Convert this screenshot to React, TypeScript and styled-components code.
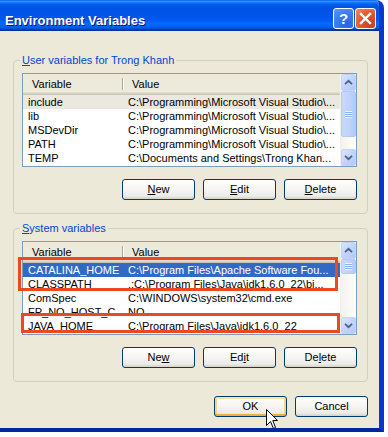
import React from 'react';
import styled, { createGlobalStyle } from 'styled-components';

const GlobalStyle = createGlobalStyle`
  html, body {
    margin: 0;
    padding: 0;
    background: #ffffff;
  }
  body {
    font-family: "Liberation Sans", Tahoma, Arial, sans-serif;
    font-size: 11px;
    color: #000000;
  }
`;

type Row = { name: string; value: string; state?: 'focus' | 'blur' };

const userVars: Row[] = [
  { name: 'include', value: 'C:\\Programming\\Microsoft Visual Studio\\...', state: 'blur' },
  { name: 'lib', value: 'C:\\Programming\\Microsoft Visual Studio\\...' },
  { name: 'MSDevDir', value: 'C:\\Programming\\Microsoft Visual Studio\\...' },
  { name: 'PATH', value: 'C:\\Programming\\Microsoft Visual Studio\\...' },
  { name: 'TEMP', value: 'C:\\Documents and Settings\\Trong Khan...' },
];

const systemVars: Row[] = [
  { name: 'CATALINA_HOME', value: 'C:\\Program Files\\Apache Software Fou...', state: 'focus' },
  { name: 'CLASSPATH', value: '.;C:\\Program Files\\Java\\jdk1.6.0_22\\bi...' },
  { name: 'ComSpec', value: 'C:\\WINDOWS\\system32\\cmd.exe' },
  { name: 'FP_NO_HOST_C...', value: 'NO' },
  { name: 'JAVA_HOME', value: 'C:\\Program Files\\Java\\jdk1.6.0_22' },
];

const Arrow = ({ up }: { up?: boolean }) => (
  <svg width="15" height="15" viewBox="0 0 15 15">
    <polyline
      points={up ? '3.5,9.5 7.5,5.5 11.5,9.5' : '3.5,5.5 7.5,9.5 11.5,5.5'}
      fill="none"
      stroke="#4d6185"
      strokeWidth="2"
    />
  </svg>
);

const Scroll = ({ thumb }: { thumb: number }) => (
  <ScrollBar>
    <ScrollButton>
      <Arrow up />
    </ScrollButton>
    <Thumb style={{ height: thumb }}>
      <Grip />
    </Thumb>
    <Track />
    <ScrollButton>
      <Arrow />
    </ScrollButton>
  </ScrollBar>
);

const VarList = ({
  rows,
  thumb,
  children,
}: {
  rows: Row[];
  thumb: number;
  children?: React.ReactNode;
}) => (
  <ListView>
    <ListBody>
      <Header>
        <HeaderCell divider>Variable</HeaderCell>
        <HeaderCell>Value</HeaderCell>
      </Header>
      {rows.map((r) => (
        <ListRow key={r.name} state={r.state}>
          <Cell>{r.name}</Cell>
          <Cell>{r.value}</Cell>
        </ListRow>
      ))}
    </ListBody>
    <Scroll thumb={thumb} />
    {children}
  </ListView>
);

const App: React.FC = () => (
  <>
    <GlobalStyle />
    <Window>
      <TitleBar>
        <Title>Environment Variables</Title>
        <Controls>
          <HelpButton>?</HelpButton>
          <CloseButton>
            <svg width="13" height="13" viewBox="0 0 13 13">
              <path d="M2 2 L11 11 M11 2 L2 11" stroke="#ffffff" strokeWidth="2.4" strokeLinecap="square" />
            </svg>
          </CloseButton>
        </Controls>
      </TitleBar>

      <Body>
        <GroupBox>
          <Legend>
            <u>U</u>ser variables for Trong Khanh
          </Legend>
          <VarList rows={userVars} thumb={46} />
          <ButtonRow>
            <Button>
              <u>N</u>ew
            </Button>
            <Button>
              <u>E</u>dit
            </Button>
            <Button>
              <u>D</u>elete
            </Button>
          </ButtonRow>
        </GroupBox>

        <GroupBox>
          <Legend>
            <u>S</u>ystem variables
          </Legend>
          <VarList rows={systemVars} thumb={15}>
            <Marker style={{ left: -5, top: 15, width: 320, height: 34 }} />
            <Marker style={{ left: -2, top: 71, width: 319, height: 20 }} />
          </VarList>
          <ButtonRow>
            <Button>
              Ne<u>w</u>
            </Button>
            <Button>
              Ed<u>i</u>t
            </Button>
            <Button>
              De<u>l</u>ete
            </Button>
          </ButtonRow>
        </GroupBox>

        <DialogButtons>
          <Button hot>OK</Button>
          <Button>Cancel</Button>
        </DialogButtons>
      </Body>

      <Pointer width="13" height="21" viewBox="0 0 13 21">
        <path
          d="M0.5 0.5 L0.5 16.5 L4.5 12.5 L7.5 19.5 L9.5 18.5 L6.8 11.5 L11.5 11.5 Z"
          fill="#ffffff"
          stroke="#000000"
          strokeWidth="1"
        />
      </Pointer>
    </Window>
  </>
);

export default App;

const Window = styled.div`
  position: relative;
  width: 379px;
  background: #ece9d8;
  border-right: 5px solid #0a37cc;
  border-bottom: 4px solid #00279c;
  border-top-right-radius: 8px;
  overflow: hidden;
`;

const TitleBar = styled.div`
  display: flex;
  justify-content: space-between;
  align-items: flex-start;
  height: 31px;
  box-sizing: border-box;
  padding: 8px 3px 0 5px;
  background: linear-gradient(
    180deg,
    #0058ee 0%,
    #3593ff 4%,
    #288eff 6%,
    #127dff 8%,
    #036ffc 10%,
    #0262ee 14%,
    #0057e5 20%,
    #0054e3 24%,
    #0055eb 56%,
    #005bf5 66%,
    #026afe 76%,
    #0062ef 86%,
    #0052d6 92%,
    #0040ab 94%,
    #003092 100%
  );
`;

const Title = styled.div`
  margin-top: 5px;
  font-family: "Liberation Sans", "Trebuchet MS", Arial, sans-serif;
  font-weight: bold;
  font-size: 13px;
  line-height: 15px;
  color: #ffffff;
  text-shadow: 1px 1px #0f1089;
`;

const Controls = styled.div`
  display: flex;
  gap: 1px;
`;

const TitleButton = styled.div`
  width: 21px;
  height: 21px;
  box-sizing: border-box;
  border: 1px solid #ffffff;
  border-radius: 3px;
  display: flex;
  align-items: center;
  justify-content: center;
  color: #ffffff;
`;

const HelpButton = styled(TitleButton)`
  background: radial-gradient(circle at 70% 80%, #2a63dd 0%, #3a7df2 55%, #5f9bfa 100%);
  font-family: "Liberation Sans", Arial, sans-serif;
  font-weight: bold;
  font-size: 15px;
`;

const CloseButton = styled(TitleButton)`
  background: radial-gradient(circle at 80% 80%, #c8401c 0%, #e15a30 55%, #f08a66 100%);
`;

const Body = styled.div`
  display: flex;
  flex-direction: column;
  gap: 8px;
  padding: 23px 11px 11px 13px;
`;

const GroupBox = styled.fieldset`
  margin: 0;
  min-width: 0;
  padding: 6px 10px 13px 8px;
  border: 1px solid #d0d0bf;
  border-radius: 4px;
`;

const Legend = styled.legend`
  padding: 0 2px;
  margin-left: -2px;
  color: #0046d5;
  font-size: 11px;
  line-height: 13px;
`;

const ListView = styled.div`
  position: relative;
  display: flex;
  height: 94px;
  box-sizing: border-box;
  border: 1px solid #7f9db9;
  background: #ffffff;
`;

const ListBody = styled.div`
  flex: 1;
  min-width: 0;
  overflow: hidden;
`;

const Header = styled.div`
  display: grid;
  grid-template-columns: 100px 1fr;
  height: 21px;
  background: #ebeadb;
  box-shadow: inset 0 -1px #cbc7b8, inset 0 -2px #d6d2c2, inset 0 -3px #e2decd;
`;

const HeaderCell = styled.div<{ divider?: boolean }>`
  position: relative;
  padding-left: 9px;
  line-height: 20px;
  white-space: nowrap;

  &::after {
    content: '';
    display: ${({ divider }) => (divider ? 'block' : 'none')};
    position: absolute;
    right: 0;
    top: 4px;
    bottom: 5px;
    width: 1px;
    background: #aca899;
    box-shadow: 1px 0 #ffffff;
  }
`;

const ListRow = styled.div<{ state?: 'focus' | 'blur' }>`
  display: grid;
  grid-template-columns: 100px 1fr;
  height: 14px;
  line-height: 14px;
  background: ${({ state }) =>
    state === 'focus' ? '#316ac5' : state === 'blur' ? '#ebe8df' : 'transparent'};
  color: ${({ state }) => (state === 'focus' ? '#ffffff' : '#000000')};
`;

const Cell = styled.div`
  padding-left: 5px;
  white-space: nowrap;
  overflow: hidden;
`;

const ScrollBar = styled.div`
  width: 16px;
  display: flex;
  flex-direction: column;
  background: linear-gradient(90deg, #f3f1ec, #fefefb);
`;

const ScrollButton = styled.div`
  height: 17px;
  box-sizing: border-box;
  margin: 0 0 0 1px;
  border: 1px solid #c5d4f6;
  border-radius: 2px;
  background: linear-gradient(135deg, #dbe5fe 0%, #c2d3fc 50%, #b4c8f6 100%);
  display: flex;
  align-items: center;
  justify-content: center;
`;

const Thumb = styled.div`
  box-sizing: border-box;
  margin-left: 1px;
  border: 1px solid #b6c8f3;
  border-radius: 2px;
  background: linear-gradient(90deg, #c9d8fc 0%, #c1d3fb 50%, #b4c9f7 100%);
  display: flex;
  align-items: center;
  justify-content: center;
`;

const Grip = styled.div`
  width: 7px;
  height: 7px;
  background: repeating-linear-gradient(
    180deg,
    #eef4fe 0px,
    #eef4fe 1px,
    #8cb0f8 1px,
    #8cb0f8 2px
  );
`;

const Track = styled.div`
  flex: 1;
`;

const ButtonRow = styled.div`
  display: flex;
  justify-content: flex-end;
  gap: 8px;
  margin-top: 12px;
`;

const DialogButtons = styled(ButtonRow)`
  margin-top: 6px;
`;

const Button = styled.div<{ hot?: boolean }>`
  width: 73px;
  height: 21px;
  box-sizing: border-box;
  border: 1px solid #003c74;
  border-radius: 3px;
  background: linear-gradient(180deg, #ffffff 0%, #f7f6f2 45%, #ecebe6 85%, #d6d0c5 100%);
  box-shadow: ${({ hot }) =>
    hot
      ? 'inset 0 2px #ffe2a3, inset 0 -2px #f0b13c, inset 2px 0 #fbd27d, inset -2px 0 #fbd27d'
      : 'none'};
  display: flex;
  align-items: center;
  justify-content: center;
  font-size: 11px;
  line-height: 13px;
`;

const Marker = styled.div`
  position: absolute;
  box-sizing: border-box;
  border: 3px solid #ec4a1e;
  pointer-events: none;
`;

const Pointer = styled.svg`
  position: absolute;
  left: 266px;
  top: 409px;
`;
